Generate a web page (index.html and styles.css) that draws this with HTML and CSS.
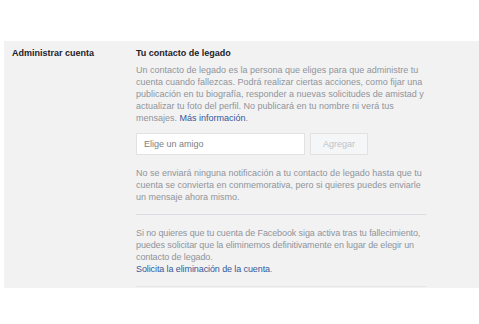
FILE: index.html
```html
<!DOCTYPE html>
<html lang="es">

<head>
  <meta charset="UTF-8">
  <meta name="viewport" content="width=device-width, initial-scale=1.0">
  <title>Administrar cuenta</title>
  <link rel="stylesheet" href="styles.css">
</head>

<body>
  <div class="settings-row">
    <div class="row-label">Administrar cuenta</div>
    <div class="row-body">
      <h3>Tu contacto de legado</h3>
      <p class="muted">Un contacto de legado es la persona que eliges para que administre tu cuenta cuando fallezcas. Podrá realizar ciertas acciones, como fijar una publicación en tu biografía, responder a nuevas solicitudes de amistad y actualizar tu foto del perfil. No publicará en tu nombre ni verá tus mensajes. <a href="#">Más información</a>.</p>

      <div class="friend-picker">
        <input type="text" placeholder="Elige un amigo" />
        <button disabled>Agregar</button>
      </div>

      <p class="muted">No se enviará ninguna notificación a tu contacto de legado hasta que tu cuenta se convierta en conmemorativa, pero si quieres puedes enviarle un mensaje ahora mismo.</p>

      <div class="section">
        <p class="muted">Si no quieres que tu cuenta de Facebook siga activa tras tu fallecimiento, puedes solicitar que la eliminemos definitivamente en lugar de elegir un contacto de legado.<br><a href="#">Solicita la eliminación de la cuenta</a>.</p>
      </div>
    </div>
  </div>
</body>

</html>
```

FILE: styles.css
```css
body {
  font-family: 'Liberation Sans', Arial, sans-serif;
  margin: 0;
  padding: 41px 0 0 4px;
  background: #ffffff;
  font-size: 9px;
  line-height: 12px;
}

.settings-row {
  display: flex;
  background: #f2f2f2;
  height: 247px;
  box-sizing: border-box;
  padding: 5px 0 0 8px;
}

.row-label {
  flex: none;
  width: 124px;
  font-weight: bold;
  color: #1d2129;
  padding-top: 1px;
}

.row-body {
  flex: none;
  width: 290px;
}

h3 {
  margin: 0;
  padding-top: 1px;
  font-size: 9px;
  line-height: 12px;
  color: #1d2129;
}

.muted {
  margin: 0;
  color: #90949c;
}

.row-body > h3 + .muted {
  margin-top: 5px;
}

a {
  color: #365899;
  text-decoration: none;
}

.friend-picker {
  display: flex;
  gap: 5px;
  margin: 9px 0 12px;
}

.friend-picker input {
  width: 169px;
  height: 22px;
  box-sizing: border-box;
  border: 1px solid #e2e2e2;
  background: #ffffff;
  padding: 0 7px;
  font-family: inherit;
  font-size: 9px;
  outline: none;
}

.friend-picker input::placeholder {
  color: #7b7f86;
}

.friend-picker button {
  width: 58px;
  height: 22px;
  border: 1px solid #e2e2e2;
  background: #f5f6f7;
  color: #bec3c9;
  font-family: inherit;
  font-size: 9px;
  padding: 0;
}

.section {
  margin-top: 11px;
  border-top: 1px solid #dadde1;
  border-bottom: 1px solid #e3e5e8;
  padding: 12px 0 11px;
}

.section .muted {
  letter-spacing: -0.1px;
}
```
